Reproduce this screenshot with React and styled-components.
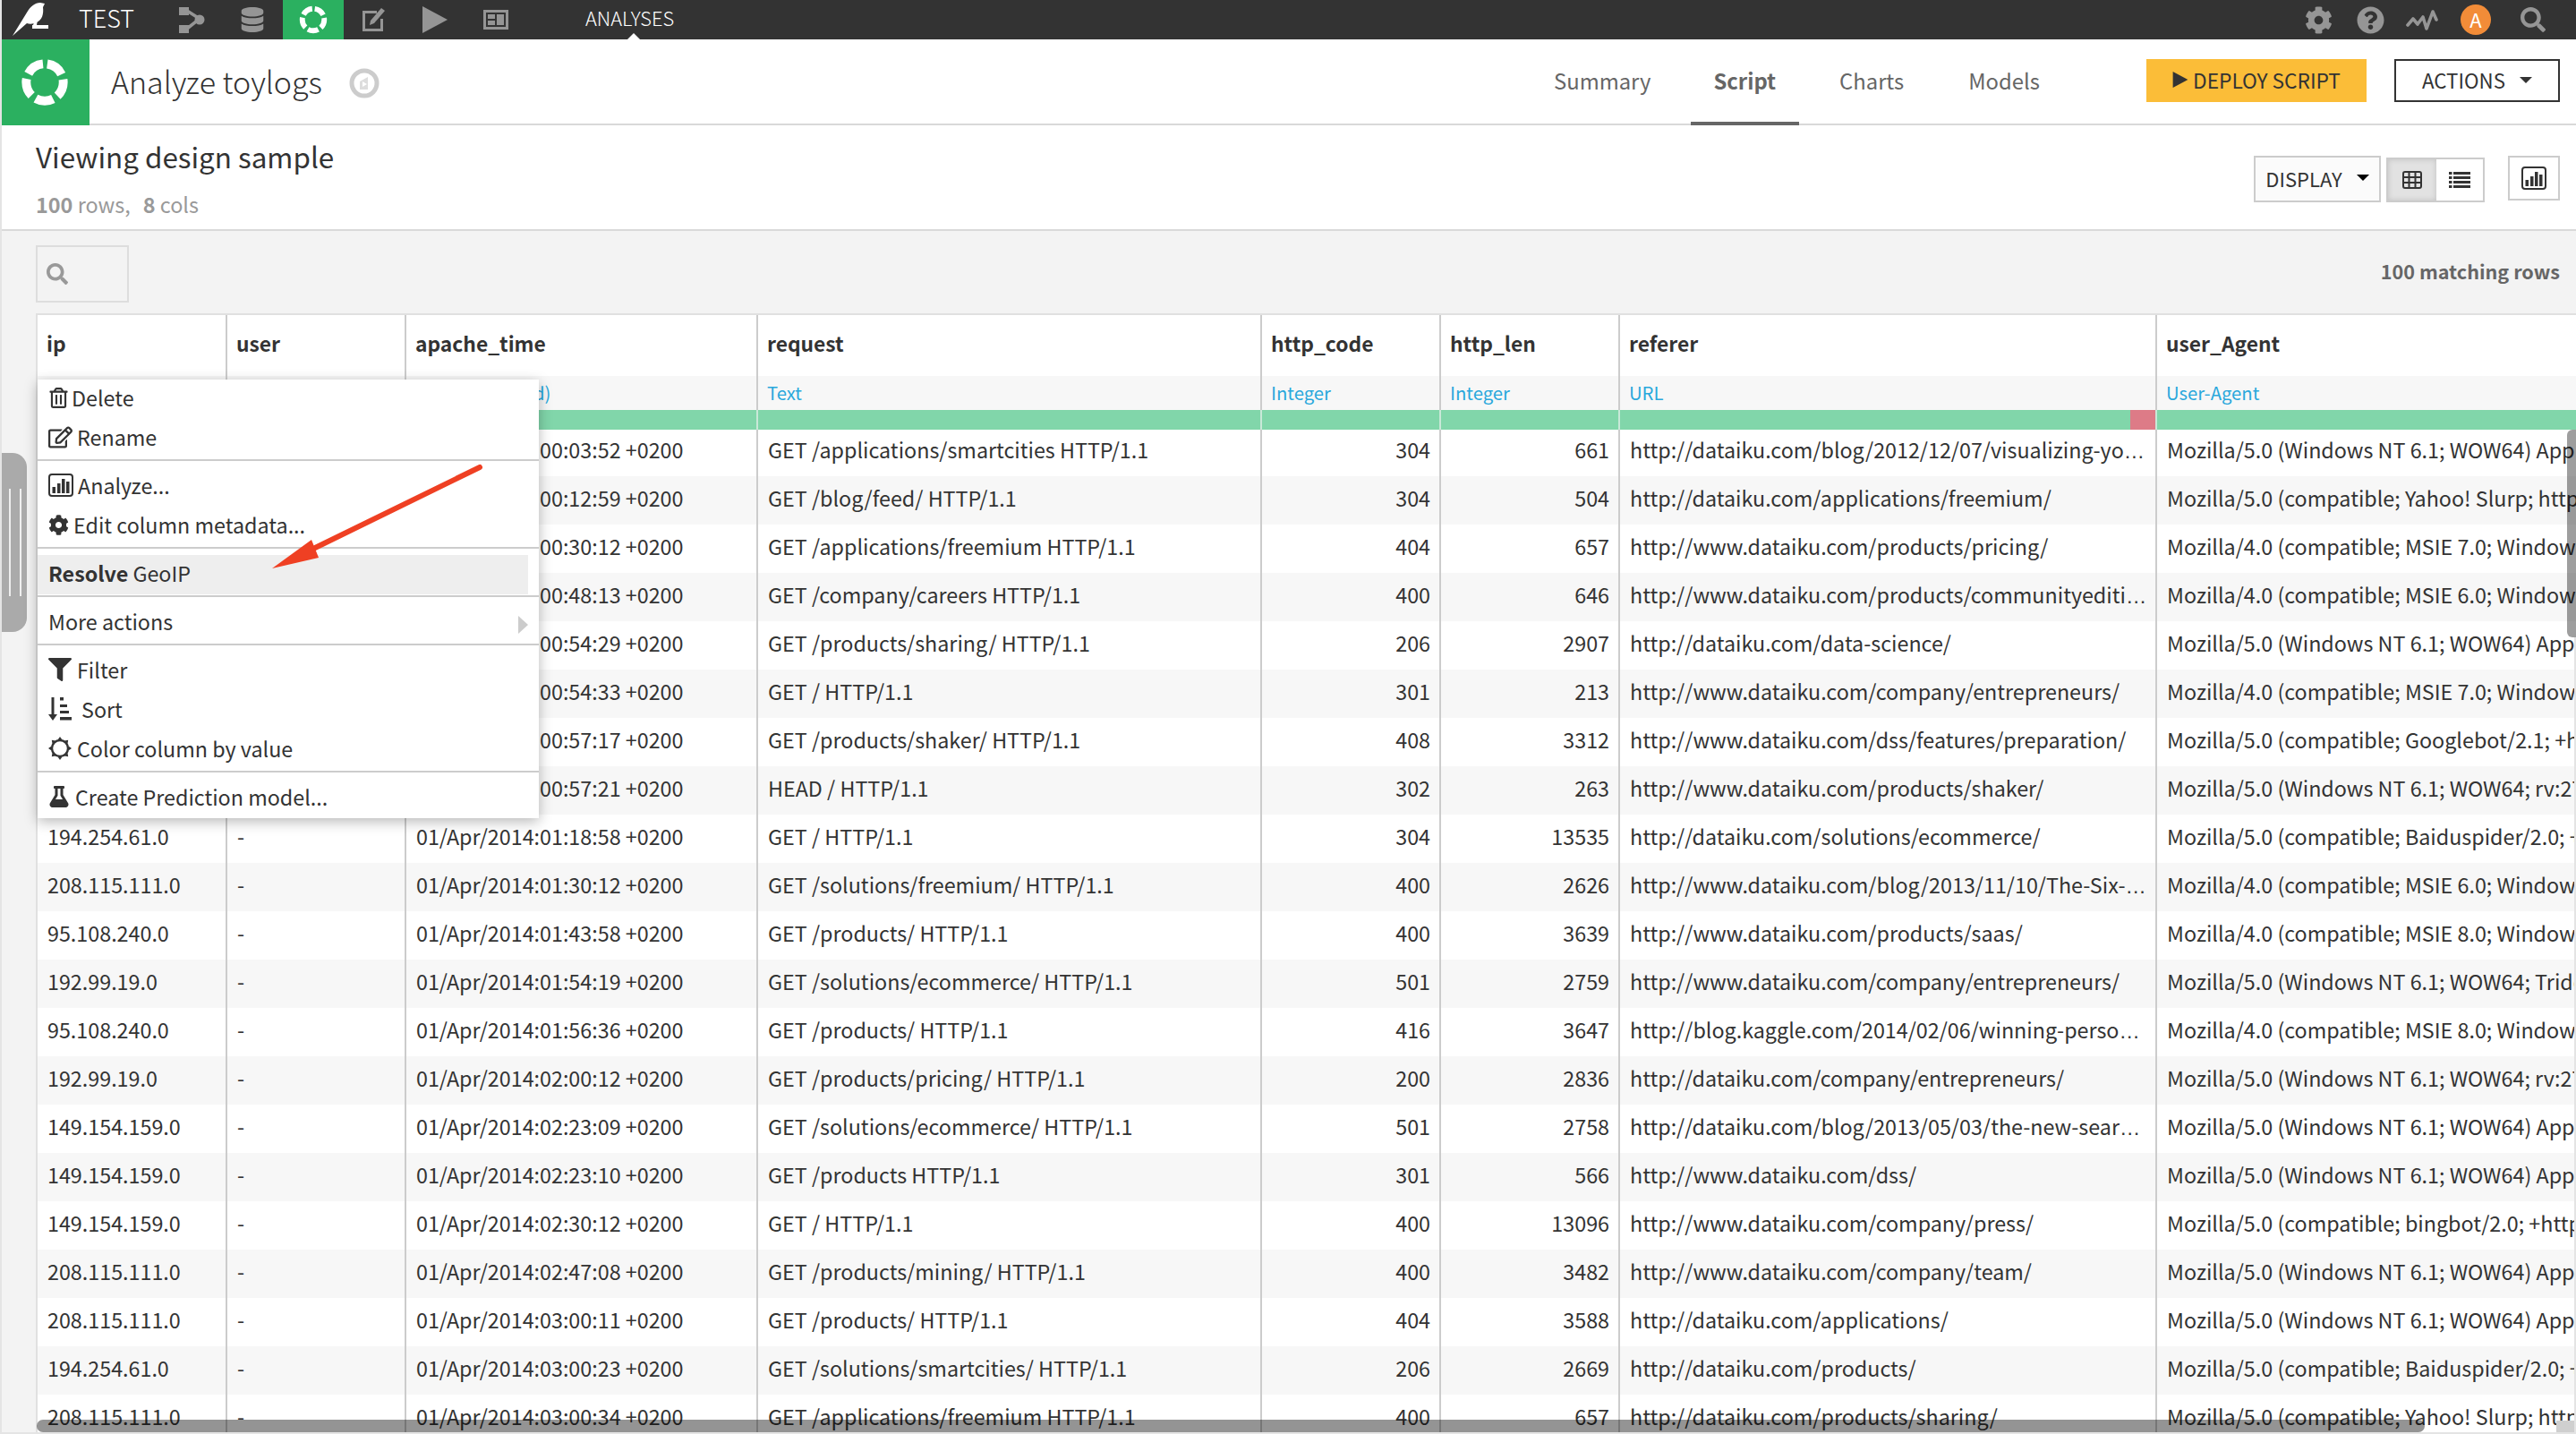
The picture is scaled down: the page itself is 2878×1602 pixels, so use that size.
import React from 'react'
import styled, {createGlobalStyle} from 'styled-components'
import {FaCog, FaQuestionCircle, FaDatabase, FaRegTrashAlt, FaRegEdit, FaFilter, FaFlask, FaSearch} from 'react-icons/fa'

const GlobalStyle = createGlobalStyle`
  html, body {
    margin: 0;
    padding: 0;
    width: 2878px;
    height: 1602px;
    overflow: hidden;
    background: #f3f3f3;
    font-family: 'Noto Sans CJK SC', 'Open Sans', sans-serif;
    color: #333;
  }
  * { box-sizing: border-box; }
`

const Page = styled.div`
  position: relative;
  width: 2878px;
  height: 1602px;
  overflow: hidden;
  background: #f3f3f3;
  border-left: 2px solid #e4e4e4;
`

/* top nav */
const TopBar = styled.div`
  position: absolute;
  left: -2px;
  top: 0;
  width: 2878px;
  height: 44px;
  background: #333;
  display: flex;
  align-items: center;
  color: #fff;
`
const Brand = styled.div`
  width: 88px;
  height: 44px;
  display: flex;
  padding-left: 13px;
`
const ProjectName = styled.div`
  width: 92px;
  font-size: 27px;
  font-weight: 300;
  line-height: 40px;
  height: 44px;
`
const NavSlot = styled.div`
  width: 68px;
  height: 44px;
  display: flex;
  align-items: center;
  justify-content: center;
  background: ${props => props.$active ? '#2bb060' : 'transparent'};
  color: #959595;
`
const SectionName = styled.div`
  position: relative;
  margin-left: 66px;
  width: 98px;
  height: 44px;
  font-size: 21.8px;
  font-weight: 300;
  line-height: 40px;
  white-space: nowrap;
  &:after {
    content: '';
    position: absolute;
    left: 47px;
    bottom: 0;
    border-left: 7px solid transparent;
    border-right: 7px solid transparent;
    border-bottom: 7px solid #fff;
  }
`
const NavRight = styled.div`
  margin-left: auto;
  display: flex;
  padding-right: 15px;
`
const IconSlot = styled.div`
  width: ${props => props.$w}px;
  height: 44px;
  display: flex;
  align-items: center;
  justify-content: center;
  color: #959595;
`
const Avatar = styled.div`
  width: 34px;
  height: 34px;
  border-radius: 50%;
  background: #f28c38;
  color: #fff;
  font-size: 22px;
  line-height: 32px;
  text-align: center;
`

/* analysis header */
const Header = styled.div`
  position: absolute;
  left: -2px;
  top: 44px;
  width: 2878px;
  height: 96px;
  background: #fff;
  border-bottom: 2px solid #d9d9d9;
  display: flex;
`
const HeaderLogo = styled.div`
  width: 100px;
  height: 96px;
  background: #2bb060;
  display: flex;
  align-items: center;
  justify-content: center;
`
const AnalysisTitle = styled.div`
  margin-left: 24px;
  font-size: 34px;
  font-weight: 300;
  line-height: 94px;
  color: #333;
  white-space: nowrap;
`
const TitleIcon = styled.div`
  margin-left: 30px;
  height: 94px;
  display: flex;
  align-items: center;
  padding-top: 4px;
`
const Tabs = styled.div`
  position: absolute;
  left: 1736px;
  top: 0;
  height: 96px;
  display: flex;
`
const Tab = styled.div`
  font-size: 23.8px;
  line-height: 91px;
  margin-right: ${props => props.$gap}px;
  color: #666;
  position: relative;
  white-space: nowrap;
  font-weight: ${props => props.$active ? 700 : 400};
  ${props => props.$active ? `
    &:after {
      content: '';
      position: absolute;
      left: -25px;
      right: -26px;
      bottom: 0;
      height: 4px;
      background: #666;
    }
  ` : ''}
`
const DeployButton = styled.div`
  position: absolute;
  left: 2398px;
  top: 22px;
  width: 246px;
  height: 48px;
  background: #fbbd38;
  font-size: 22.7px;
  padding-bottom: 2px;
  display: flex;
  align-items: center;
  justify-content: center;
  color: #333;
`
const ActionsButton = styled.div`
  position: absolute;
  left: 2675px;
  top: 22px;
  width: 185px;
  height: 48px;
  background: #fff;
  border: 2px solid #333;
  font-size: 22.3px;
  padding-bottom: 2px;
  display: flex;
  align-items: center;
  justify-content: center;
  color: #333;
`
const Caret = styled.span`
  display: inline-block;
  margin-left: 16px;
  border-left: 7px solid transparent;
  border-right: 7px solid transparent;
  border-top: 7px solid ${props => props.$color || '#333'};
`

/* sample bar */
const SampleBar = styled.div`
  position: absolute;
  left: 0;
  top: 140px;
  width: 2876px;
  height: 118px;
  background: #fff;
  border-bottom: 2px solid #d9d9d9;
`
const SampleTitle = styled.div`
  position: absolute;
  left: 38px;
  top: 11px;
  font-size: 31.4px;
  line-height: 48px;
  color: #333;
  white-space: nowrap;
`
const SampleStats = styled.div`
  position: absolute;
  left: 38px;
  top: 70px;
  font-size: 23.4px;
  line-height: 36px;
  color: #999;
  white-space: nowrap;
  b { font-weight: 700; }
`
const StatGap = styled.span`
  display: inline-block;
  width: 14px;
`
const DisplayButton = styled.div`
  position: absolute;
  left: 2516px;
  top: 34px;
  width: 142px;
  height: 52px;
  background: #fbfbfb;
  border: 2px solid #ccc;
  font-size: 22px;
  padding-bottom: 3px;
  display: flex;
  align-items: center;
  justify-content: center;
  color: #333;
`
const ViewToggle = styled.div`
  position: absolute;
  left: 2664px;
  top: 36px;
  width: 110px;
  height: 50px;
  display: flex;
  border: 2px solid #ccc;
`
const ViewOption = styled.div`
  width: ${props => props.$active ? 55 : 53}px;
  display: flex;
  align-items: center;
  justify-content: center;
  color: #333;
  background: ${props => props.$active ? '#e2e2e2' : '#fff'};
  box-shadow: ${props => props.$active ? 'inset 0 0 6px rgba(0,0,0,0.15)' : 'none'};
`
const ChartButton = styled.div`
  position: absolute;
  left: 2800px;
  top: 34px;
  width: 58px;
  height: 50px;
  border: 2px solid #ccc;
  background: #fff;
  display: flex;
  align-items: center;
  justify-content: center;
  color: #333;
`

/* filter line */
const SearchBox = styled.div`
  position: absolute;
  left: 38px;
  top: 274px;
  width: 104px;
  height: 64px;
  border: 2px solid #ddd;
  background: #f3f3f3;
  color: #999;
  display: flex;
  align-items: center;
  padding-left: 10px;
`
const MatchCount = styled.div`
  position: absolute;
  right: 18px;
  top: 286px;
  font-size: 21.6px;
  font-weight: 700;
  line-height: 34px;
  color: #666;
`

/* table */
const Table = styled.div`
  position: absolute;
  left: 38px;
  top: 350px;
  width: 2840px;
  border-top: 2px solid #e0e0e0;
  border-left: 2px solid #e0e0e0;
  background: #fff;
`
const Row = styled.div`
  display: flex;
  height: ${props => props.$h}px;
  background: ${props => props.$bg || '#fff'};
`
const Cell = styled.div`
  flex: none;
  width: ${props => props.$w}px;
  padding: 0 ${props => props.$last ? 0 : 10}px 0 11px;
  border-right: ${props => props.$last ? 'none' : '2px solid #ccc'};
  font-size: 23.3px;
  line-height: 49px;
  white-space: nowrap;
  overflow: hidden;
  text-align: ${props => props.$right ? 'right' : 'left'};
  color: #333;
`
const HeadCell = styled(Cell)`
  font-weight: 700;
  line-height: 64px;
  font-size: 22.8px;
  padding-left: 10px;
`
const TypeCell = styled(Cell)`
  font-size: 20.3px;
  line-height: 36px;
  color: #2aa8dc;
  padding-left: 10px;
`
const Ellipsis = styled.span`
  font-family: 'Liberation Sans', sans-serif;
`
const BarWrap = styled(Row)`
  position: relative;
  z-index: 1;
  margin-bottom: -2px;
`
const BarCell = styled.div`
  flex: none;
  position: relative;
  width: ${props => props.$w}px;
  background: #81d6aa;
  border-right: ${props => props.$last ? 'none' : '2px solid #c9e8d8'};
`
const BadPart = styled.div`
  position: absolute;
  right: 0;
  top: 0;
  width: 28px;
  height: 100%;
  background: #dd7b87;
`

/* column menu */
const Menu = styled.div`
  position: absolute;
  left: 40px;
  top: 424px;
  width: 560px;
  height: 490px;
  background: #fff;
  box-shadow: 0 4px 14px rgba(0,0,0,0.28);
  z-index: 3;
`
const MenuItem = styled.div`
  position: relative;
  height: 44px;
  margin-right: ${props => props.$hover ? 12 : 0}px;
  padding: 0 0 4px 12px;
  display: flex;
  align-items: center;
  font-size: 23.3px;
  color: #333;
  white-space: nowrap;
  background: ${props => props.$hover ? '#eee' : 'transparent'};
`
const MenuIcon = styled.span`
  flex: none;
  width: ${props => props.$w}px;
  display: flex;
  align-items: center;
`
const MenuDivider = styled.div`
  height: 2px;
  margin: 1px 0 ${props => props.$after}px;
  background: #ccc;
`
const MoreCaret = styled.span`
  position: absolute;
  right: 12px;
  top: 14px;
  border-top: 10px solid transparent;
  border-bottom: 10px solid transparent;
  border-left: 11px solid #ccc;
`
const SemiBold = styled.span`
  font-weight: 700;
  margin-right: 5px;
`

/* annotation + scroll handles */
const Annotation = styled.svg`
  position: absolute;
  left: -2px;
  top: 0;
  z-index: 4;
  pointer-events: none;
`
const SideHandle = styled.div`
  position: absolute;
  left: -2px;
  top: 506px;
  width: 30px;
  height: 200px;
  background: #aaa;
  border-radius: 0 16px 16px 0;
  z-index: 2;
  &:before {
    content: '';
    position: absolute;
    left: 10px;
    top: 40px;
    width: 10px;
    height: 120px;
    border-left: 2px solid #eee;
    border-right: 2px solid #eee;
  }
`
const HorizontalThumb = styled.div`
  position: absolute;
  left: 39px;
  top: 1586px;
  width: 2668px;
  height: 14px;
  border-radius: 8px;
  background: rgba(0,0,0,0.42);
  z-index: 2;
`
const VerticalThumb = styled.div`
  position: absolute;
  right: 0;
  top: 480px;
  width: 10px;
  height: 232px;
  border-radius: 6px 0 0 6px;
  background: rgba(0,0,0,0.38);
  z-index: 2;
`
const BottomEdge = styled.div`
  position: absolute;
  left: 0;
  right: 0;
  top: 1600px;
  height: 2px;
  background: #e4e4e4;
  z-index: 2;
`
const ScrollTrack = styled.div`
  position: absolute;
  right: 0;
  top: 712px;
  bottom: 0;
  width: 2px;
  background: #e4e4e4;
  z-index: 2;
`
const ScrollCorner = styled.div`
  position: absolute;
  right: 2px;
  top: 1587px;
  width: 20px;
  height: 13px;
  background: #cfcfcf;
  z-index: 2;
`

const Ring = ({size, color = '#fff'}) => (
  <svg width={size} height={size} viewBox="0 0 60 60">
    <circle cx="30" cy="30" r="23" fill="none" stroke={color} strokeWidth="11" strokeDasharray="22.4 6.5" strokeDashoffset="-3.25" transform="rotate(-90 30 30)" />
  </svg>
)

const BirdLogo = () => (
  <svg width="42" height="42" viewBox="0 0 42 42">
    <path fill="#fff" d="M1 40 L17 14 C21 7 26 3 32 3 L37 4 L35 8 C36 16 34 22 28 25 C24 27 20 27 17 26 Z" />
    <rect x="23" y="28" width="18" height="4" fill="#fff" />
    <path fill="#fff" d="M26 22 L29 22 L28 28 L24 28 Z" />
  </svg>
)

const FlowIcon = () => (
  <svg width="30" height="30" viewBox="0 0 30 30" fill="currentColor">
    <rect x="1" y="1" width="11" height="9" />
    <rect x="1" y="21" width="11" height="9" />
    <circle cx="24" cy="15" r="5.5" />
    <path d="M10 5 L24 14 L10 25" fill="none" stroke="currentColor" strokeWidth="3.5" />
  </svg>
)

const NotebookIcon = () => (
  <svg width="30" height="30" viewBox="0 0 30 30" fill="currentColor">
    <path d="M2 5 H18 V8 H5 V25 H22 V14 H25 V28 H2 Z" />
    <path d="M10 21 L11 16 L23 2 L27 5 L15 19 Z" />
  </svg>
)

const PlayIcon = ({size = 30}) => (
  <svg width={size} height={size} viewBox="0 0 30 30" fill="currentColor">
    <polygon points="1,0 29,15 1,30" />
  </svg>
)

const PanelIcon = () => (
  <svg width="30" height="24" viewBox="0 0 30 24" fill="currentColor">
    <path fillRule="evenodd" d="M1 1 H29 V23 H1 Z M4 4 V20 H26 V4 Z" />
    <rect x="6" y="6" width="8" height="5" />
    <rect x="6" y="13" width="8" height="5" />
    <rect x="16" y="6" width="8" height="12" />
  </svg>
)

const ActivityIcon = () => (
  <svg width="36" height="26" viewBox="0 0 36 26">
    <polyline points="2,19 8,12 13,18 19,10 23,23 30,4 34,13" fill="none" stroke="currentColor" strokeWidth="3.6" strokeLinejoin="round" strokeLinecap="round" />
  </svg>
)

const CompassIcon = () => (
  <svg width="34" height="34" viewBox="0 0 34 34">
    <circle cx="17" cy="17" r="14" fill="none" stroke="#ccc" strokeWidth="5" />
    <polygon points="21,10 21,24 12,24 12,15" fill="#ddd" />
    <polygon points="15,15 20,18 15,21" fill="#fff" />
  </svg>
)

const BarsIcon = ({w = 28, h = 26}) => (
  <svg width={w} height={h} viewBox="0 0 28 26" fill="currentColor">
    <rect x="1" y="1" width="26" height="24" rx="3" fill="none" stroke="currentColor" strokeWidth="2" />
    <rect x="4.5" y="15" width="3.5" height="7" />
    <rect x="10" y="11" width="3.5" height="11" />
    <rect x="15" y="6" width="3.5" height="16" />
    <rect x="20" y="9" width="3.5" height="13" />
  </svg>
)

const GridIcon = () => (
  <svg width="22" height="20" viewBox="0 0 22 20" fill="none" stroke="currentColor" strokeWidth="2">
    <rect x="1" y="1" width="20" height="18" rx="2" />
    <path d="M1 7 H21 M1 13 H21 M7.5 1 V19 M14.5 1 V19" />
  </svg>
)

const ListIcon = () => (
  <svg width="24" height="20" viewBox="0 0 24 20" fill="currentColor">
    <rect x="0" y="1" width="3.5" height="3" /><rect x="5" y="1" width="19" height="3" />
    <rect x="0" y="6" width="3.5" height="3" /><rect x="5" y="6" width="19" height="3" />
    <rect x="0" y="11" width="3.5" height="3" /><rect x="5" y="11" width="19" height="3" />
    <rect x="0" y="16" width="3.5" height="3" /><rect x="5" y="16" width="19" height="3" />
  </svg>
)

const SortIcon = () => (
  <svg width="26" height="26" viewBox="0 0 26 26" fill="currentColor">
    <path d="M3.5 0 H6.5 V19 H10 L5 26 L0 19 H3.5 Z" />
    <rect x="13" y="0" width="4" height="3.5" />
    <rect x="13" y="8" width="8" height="3" />
    <rect x="13" y="15" width="10" height="3" />
    <rect x="13" y="22" width="13" height="3.5" />
  </svg>
)

const SunIcon = () => (
  <svg width="26" height="26" viewBox="0 0 26 26" fill="#333">
    <circle cx="13" cy="13" r="9" fill="none" stroke="#333" strokeWidth="2.4" />
    {[0, 45, 90, 135, 180, 225, 270, 315].map(angle => (
      <polygon key={angle} points="10.5,3.5 13,0 15.5,3.5" transform={`rotate(${angle} 13 13)`} />
    ))}
  </svg>
)

const COL_WIDTHS = [212, 200, 393, 563, 200, 200, 600, 470]
const COLUMNS = [
  {name: 'ip', type: 'IP address'},
  {name: 'user', type: 'Text'},
  {name: 'apache_time', type: 'Date (unparsed)'},
  {name: 'request', type: 'Text'},
  {name: 'http_code', type: 'Integer'},
  {name: 'http_len', type: 'Integer'},
  {name: 'referer', type: 'URL'},
  {name: 'user_Agent', type: 'User-Agent'}
]

const UA_APP = 'Mozilla/5.0 (Windows NT 6.1; WOW64) AppleWebKit/537.36'
const UA_SLURP = 'Mozilla/5.0 (compatible; Yahoo! Slurp; http://help.yahoo.com/help/us/ysearch/slurp)'
const UA_MSIE7 = 'Mozilla/4.0 (compatible; MSIE 7.0; Windows NT 5.1)'
const UA_MSIE6 = 'Mozilla/4.0 (compatible; MSIE 6.0; Windows NT 5.1)'
const UA_MSIE8 = 'Mozilla/4.0 (compatible; MSIE 8.0; Windows NT 6.0)'
const UA_RV = 'Mozilla/5.0 (Windows NT 6.1; WOW64; rv:27.0) Gecko/20100101'
const UA_GOOGLE = 'Mozilla/5.0 (compatible; Googlebot/2.1; +http://www.google.com/bot.html)'
const UA_BAIDU = 'Mozilla/5.0 (compatible; Baiduspider/2.0; +http://www.baidu.com/search/spider.html)'
const UA_BING = 'Mozilla/5.0 (compatible; bingbot/2.0; +http://www.bing.com/bingbot.htm)'
const UA_TRIDENT = 'Mozilla/5.0 (Windows NT 6.1; WOW64; Trident/7.0; rv:11.0)'

const ROWS = [
  ['192.99.19.0', '00:03:52', 'GET /applications/smartcities HTTP/1.1', 304, 661, 'http://dataiku.com/blog/2012/12/07/visualizing-yo…', UA_APP],
  ['95.108.240.0', '00:12:59', 'GET /blog/feed/ HTTP/1.1', 304, 504, 'http://dataiku.com/applications/freemium/', UA_SLURP],
  ['208.115.111.0', '00:30:12', 'GET /applications/freemium HTTP/1.1', 404, 657, 'http://www.dataiku.com/products/pricing/', UA_MSIE7],
  ['192.99.19.0', '00:48:13', 'GET /company/careers HTTP/1.1', 400, 646, 'http://www.dataiku.com/products/communityediti…', UA_MSIE6],
  ['149.154.159.0', '00:54:29', 'GET /products/sharing/ HTTP/1.1', 206, 2907, 'http://dataiku.com/data-science/', UA_APP],
  ['95.108.240.0', '00:54:33', 'GET / HTTP/1.1', 301, 213, 'http://www.dataiku.com/company/entrepreneurs/', UA_MSIE7],
  ['194.254.61.0', '00:57:17', 'GET /products/shaker/ HTTP/1.1', 408, 3312, 'http://www.dataiku.com/dss/features/preparation/', UA_GOOGLE],
  ['208.115.111.0', '00:57:21', 'HEAD / HTTP/1.1', 302, 263, 'http://www.dataiku.com/products/shaker/', UA_RV],
  ['194.254.61.0', '01:18:58', 'GET / HTTP/1.1', 304, 13535, 'http://dataiku.com/solutions/ecommerce/', UA_BAIDU],
  ['208.115.111.0', '01:30:12', 'GET /solutions/freemium/ HTTP/1.1', 400, 2626, 'http://www.dataiku.com/blog/2013/11/10/The-Six-…', UA_MSIE6],
  ['95.108.240.0', '01:43:58', 'GET /products/ HTTP/1.1', 400, 3639, 'http://www.dataiku.com/products/saas/', UA_MSIE8],
  ['192.99.19.0', '01:54:19', 'GET /solutions/ecommerce/ HTTP/1.1', 501, 2759, 'http://www.dataiku.com/company/entrepreneurs/', UA_TRIDENT],
  ['95.108.240.0', '01:56:36', 'GET /products/ HTTP/1.1', 416, 3647, 'http://blog.kaggle.com/2014/02/06/winning-perso…', UA_MSIE8],
  ['192.99.19.0', '02:00:12', 'GET /products/pricing/ HTTP/1.1', 200, 2836, 'http://dataiku.com/company/entrepreneurs/', UA_RV],
  ['149.154.159.0', '02:23:09', 'GET /solutions/ecommerce/ HTTP/1.1', 501, 2758, 'http://dataiku.com/blog/2013/05/03/the-new-sear…', UA_APP],
  ['149.154.159.0', '02:23:10', 'GET /products HTTP/1.1', 301, 566, 'http://www.dataiku.com/dss/', UA_APP],
  ['149.154.159.0', '02:30:12', 'GET / HTTP/1.1', 400, 13096, 'http://www.dataiku.com/company/press/', UA_BING],
  ['208.115.111.0', '02:47:08', 'GET /products/mining/ HTTP/1.1', 400, 3482, 'http://www.dataiku.com/company/team/', UA_APP],
  ['208.115.111.0', '03:00:11', 'GET /products/ HTTP/1.1', 404, 3588, 'http://dataiku.com/applications/', UA_APP],
  ['194.254.61.0', '03:00:23', 'GET /solutions/smartcities/ HTTP/1.1', 206, 2669, 'http://dataiku.com/products/', UA_BAIDU],
  ['208.115.111.0', '03:00:34', 'GET /applications/freemium HTTP/1.1', 400, 657, 'http://dataiku.com/products/sharing/', UA_SLURP]
]

const renderValue = value => {
  if (typeof value === 'string' && value.endsWith('…')) {
    return <>{value.slice(0, -1)}<Ellipsis>…</Ellipsis></>
  }
  return value
}

const ColumnMenu = () => (
  <Menu>
    <MenuItem><MenuIcon $w={26}><FaRegTrashAlt size={23} /></MenuIcon>Delete</MenuItem>
    <MenuItem><MenuIcon $w={32}><FaRegEdit size={27} /></MenuIcon>Rename</MenuItem>
    <MenuDivider $after={7} />
    <MenuItem><MenuIcon $w={33}><BarsIcon /></MenuIcon>Analyze...</MenuItem>
    <MenuItem><MenuIcon $w={28}><FaCog size={23} /></MenuIcon>Edit column metadata...</MenuItem>
    <MenuDivider $after={7} />
    <MenuItem $hover><SemiBold>Resolve</SemiBold>GeoIP</MenuItem>
    <MenuDivider $after={7} />
    <MenuItem>More actions<MoreCaret /></MenuItem>
    <MenuDivider $after={7} />
    <MenuItem><MenuIcon $w={32}><FaFilter size={26} /></MenuIcon>Filter</MenuItem>
    <MenuItem><MenuIcon $w={37}><SortIcon /></MenuIcon>Sort</MenuItem>
    <MenuItem><MenuIcon $w={32}><SunIcon /></MenuIcon>Color column by value</MenuItem>
    <MenuDivider $after={7} />
    <MenuItem><MenuIcon $w={30}><FaFlask size={24} /></MenuIcon>Create Prediction model...</MenuItem>
  </Menu>
)

const App = () => (
  <Page>
    <GlobalStyle />
    <TopBar>
      <Brand><BirdLogo /></Brand>
      <ProjectName>TEST</ProjectName>
      <NavSlot><FlowIcon /></NavSlot>
      <NavSlot><FaDatabase size={28} /></NavSlot>
      <NavSlot $active><Ring size={32} /></NavSlot>
      <NavSlot><NotebookIcon /></NavSlot>
      <NavSlot><PlayIcon /></NavSlot>
      <NavSlot><PanelIcon /></NavSlot>
      <SectionName>ANALYSES</SectionName>
      <NavRight>
        <IconSlot $w={58}><FaCog size={31} /></IconSlot>
        <IconSlot $w={58}><FaQuestionCircle size={31} /></IconSlot>
        <IconSlot $w={58}><ActivityIcon /></IconSlot>
        <IconSlot $w={62}><Avatar>A</Avatar></IconSlot>
        <IconSlot $w={66}><FaSearch size={28} /></IconSlot>
      </NavRight>
    </TopBar>

    <Header>
      <HeaderLogo><Ring size={54} /></HeaderLogo>
      <AnalysisTitle>Analyze toylogs</AnalysisTitle>
      <TitleIcon><CompassIcon /></TitleIcon>
      <Tabs>
        <Tab $gap={70}>Summary</Tab>
        <Tab $gap={71} $active>Script</Tab>
        <Tab $gap={72}>Charts</Tab>
        <Tab $gap={0}>Models</Tab>
      </Tabs>
      <DeployButton>
        <PlayIcon size={18} />&nbsp;DEPLOY SCRIPT
      </DeployButton>
      <ActionsButton>ACTIONS<Caret /></ActionsButton>
    </Header>

    <SampleBar>
      <SampleTitle>Viewing design sample</SampleTitle>
      <SampleStats><b>100</b> rows,<StatGap /><b>8</b> cols</SampleStats>
      <DisplayButton>DISPLAY<Caret $color="#000" /></DisplayButton>
      <ViewToggle>
        <ViewOption $active><GridIcon /></ViewOption>
        <ViewOption><ListIcon /></ViewOption>
      </ViewToggle>
      <ChartButton><BarsIcon /></ChartButton>
    </SampleBar>

    <SearchBox><FaSearch size={24} /></SearchBox>
    <MatchCount>100 matching rows</MatchCount>

    <Table>
      <Row $h={68}>
        {COLUMNS.map((col, i) => (
          <HeadCell key={col.name} $w={COL_WIDTHS[i]} $last={i === 7}>{col.name}</HeadCell>
        ))}
      </Row>
      <Row $h={38} $bg="#f7f7f7">
        {COLUMNS.map((col, i) => (
          <TypeCell key={col.name} $w={COL_WIDTHS[i]} $last={i === 7}>{col.type}</TypeCell>
        ))}
      </Row>
      <BarWrap $h={22} $bg="#81d6aa">
        {COLUMNS.map((col, i) => (
          <BarCell key={col.name} $w={COL_WIDTHS[i]} $last={i === 7}>
            {col.name === 'referer' ? <BadPart /> : null}
          </BarCell>
        ))}
      </BarWrap>
      {ROWS.map((row, index) => {
        const [ip, time, request, code, len, referer, agent] = row
        const cells = [ip, '-', `01/Apr/2014:${time} +0200`, request, code, len, referer, agent]
        return (
          <Row key={index} $h={54} $bg={index % 2 ? '#f7f7f7' : '#fff'}>
            {cells.map((value, i) => (
              <Cell key={i} $w={COL_WIDTHS[i]} $right={i === 4 || i === 5} $last={i === 7}>{renderValue(value)}</Cell>
            ))}
          </Row>
        )
      })}
    </Table>

    <ColumnMenu />

    <Annotation width="2878" height="1602" viewBox="0 0 2878 1602">
      <line x1="536" y1="522" x2="350" y2="613" stroke="#ef4023" strokeWidth="6" strokeLinecap="round" />
      <polygon points="304,635 348,603 356,623" fill="#ef4023" />
    </Annotation>

    <SideHandle />
    <HorizontalThumb />
    <VerticalThumb />
    <ScrollTrack />
    <ScrollCorner />
    <BottomEdge />
  </Page>
)

export default App
